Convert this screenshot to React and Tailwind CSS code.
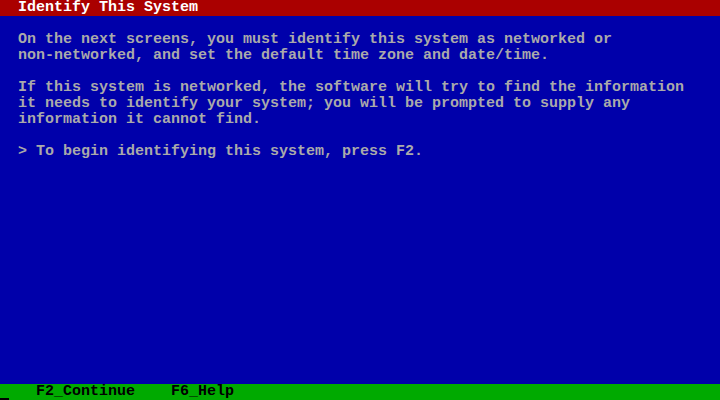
import React from "react";

const mono = { fontFamily: '"Liberation Mono", "DejaVu Sans Mono", monospace' };

const body = [
  "On the next screens, you must identify this system as networked or",
  "non-networked, and set the default time zone and date/time.",
  "",
  "If this system is networked, the software will try to find the information",
  "it needs to identify your system; you will be prompted to supply any",
  "information it cannot find.",
  "",
  "> To begin identifying this system, press F2.",
];

export default function App() {
  return (
    <div
      className="w-[720px] h-[400px] flex flex-col bg-[#0000aa] text-[15px] leading-[16px] font-bold overflow-hidden"
      style={mono}
    >
      {/* title bar */}
      <div className="h-[16px] bg-[#aa0000] text-white pl-[18px] whitespace-pre">
        Identify This System
      </div>

      {/* screen body */}
      <div className="flex-1 pt-[16px] pl-[18px] text-[#aaaaaa]">
        {body.map((line, i) => (
          <div key={i} className="h-[16px] whitespace-pre">
            {line}
          </div>
        ))}
      </div>

      {/* function key bar */}
      <div className="relative h-[16px] bg-[#00aa00] text-black pl-[36px] whitespace-pre">
        {"F2_Continue    F6_Help"}
        <span className="absolute left-0 bottom-0 w-[9px] h-[2px] bg-black" />
      </div>
    </div>
  );
}
